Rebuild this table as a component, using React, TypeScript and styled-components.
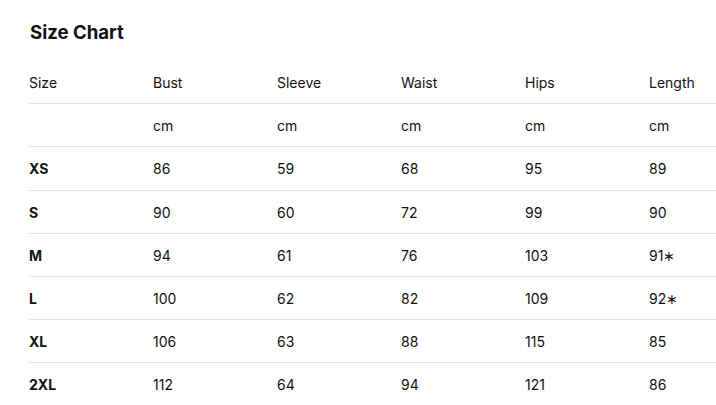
import React from "react";
import styled, { createGlobalStyle } from "styled-components";

const GlobalStyle = createGlobalStyle`
  html, body {
    margin: 0;
    padding: 0;
    background: #ffffff;
    overflow: hidden;
  }
  body {
    font-family: Inter, "Noto Sans", sans-serif;
    color: #111111;
  }
`;

const Page = styled.div`
  padding: 18px 0 0 29px;
  overflow: hidden;
`;

const Title = styled.h2`
  margin: 0 0 15px;
  padding-left: 1px;
  font-size: 18.6px;
  line-height: 28px;
  font-weight: 700;
  color: #111111;
`;

const Table = styled.table`
  border-collapse: collapse;
  width: 744px;
  table-layout: fixed;
  font-size: 14px;
  line-height: 20px;
`;

const Row = styled.tr<{ $last?: boolean }>`
  border-bottom: ${p => (p.$last ? "none" : "1px solid #e2e2e2")};
`;

const HeadCell = styled.th`
  width: 124px;
  padding: 12px 0 10.2px;
  text-align: left;
  font-weight: 400;
  color: #111111;
`;

const Cell = styled.td<{ $strong?: boolean }>`
  padding: 12px 0 10.2px;
  text-align: left;
  font-weight: ${p => (p.$strong ? 700 : 400)};
  color: #111111;
`;

const columns = ["Size", "Bust", "Sleeve", "Waist", "Hips", "Length"];

const rows: string[][] = [
  ["XS", "86", "59", "68", "95", "89"],
  ["S", "90", "60", "72", "99", "90"],
  ["M", "94", "61", "76", "103", "91\u2217"],
  ["L", "100", "62", "82", "109", "92\u2217"],
  ["XL", "106", "63", "88", "115", "85"],
  ["2XL", "112", "64", "94", "121", "86"],
];

export default function App() {
  return (
    <>
      <GlobalStyle />
      <Page>
        <Title>Size Chart</Title>
        <Table>
          <thead>
            <Row>
              {columns.map(c => (
                <HeadCell key={c}>{c}</HeadCell>
              ))}
            </Row>
          </thead>
          <tbody>
            <Row>
              <Cell />
              {columns.slice(1).map(c => (
                <Cell key={c}>cm</Cell>
              ))}
            </Row>
            {rows.map((r, ri) => (
              <Row key={r[0]} $last={ri === rows.length - 1}>
                {r.map((v, i) => (
                  <Cell key={i} $strong={i === 0}>
                    {v}
                  </Cell>
                ))}
              </Row>
            ))}
          </tbody>
        </Table>
      </Page>
    </>
  );
}
